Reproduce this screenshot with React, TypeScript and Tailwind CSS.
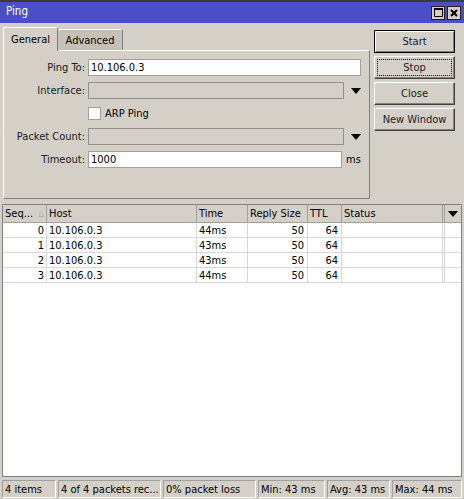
import React from 'react';

const font = { fontFamily: '"DejaVu Sans Condensed", "DejaVu Sans", Verdana, sans-serif', fontStretch: 'condensed' as const };

const rows = [
  { seq: 0, host: '10.106.0.3', time: '44ms', size: 50, ttl: 64 },
  { seq: 1, host: '10.106.0.3', time: '43ms', size: 50, ttl: 64 },
  { seq: 2, host: '10.106.0.3', time: '43ms', size: 50, ttl: 64 },
  { seq: 3, host: '10.106.0.3', time: '44ms', size: 50, ttl: 64 },
];

const Arrow = () => (
  <svg width="10" height="6" viewBox="0 0 10 6" className="block">
    <path d="M0 0 H10 L5 6 Z" fill="#000" />
  </svg>
);

const Label: React.FC<{ text: string }> = ({ text }) => (
  <div className="w-[84px] shrink-0 text-right pr-[3px] text-[#1a1a1a] whitespace-nowrap">{text}</div>
);

const Btn: React.FC<{ text: string; variant?: 'default' | 'focus' }> = ({ text, variant }) => (
  <div
    className={`h-[23px] flex items-center justify-center border text-[#1a1a2a] ${
      variant === 'default'
        ? 'border-[#000] shadow-[inset_1px_1px_0_#fff,inset_-1px_-1px_0_#808080]'
        : 'border-t-white border-l-white border-r-[#404040] border-b-[#404040] shadow-[inset_-1px_-1px_0_#808080]'
    }`}
  >
    {variant === 'focus' ? (
      <div className="w-[75px] h-[17px] border border-dotted border-[#000] flex items-center justify-center">{text}</div>
    ) : (
      text
    )}
  </div>
);

export default function App() {
  return (
    <div className="w-[464px] h-[499px] bg-[#d4d0c8] flex flex-col text-[11px] leading-none overflow-hidden" style={font}>
      {/* title bar */}
      <div className="h-[2px] bg-[#3a3a3a]" />
      <div className="h-[21px] bg-[#4a4fc9] flex items-center pl-[6px] pr-[3px] text-white text-[11.5px]">
        <span className="flex-1 pb-[1px]">Ping</span>
        <div className="flex gap-[2px]">
          <div className="w-[14px] h-[14px] bg-[#d4d0c8] border border-[#222] flex items-center justify-center">
            <div className="w-[9px] h-[9px] border border-[#000] border-t-2" />
          </div>
          <div className="w-[14px] h-[14px] bg-[#d4d0c8] border border-[#222] flex items-center justify-center">
            <svg width="8" height="8" viewBox="0 0 8 8">
              <path d="M1 1 L7 7 M7 1 L1 7" stroke="#000" strokeWidth="2" />
            </svg>
          </div>
        </div>
      </div>

      {/* upper area */}
      <div className="flex pl-[3px] pt-[3px]">
        <div className="w-[367px] flex flex-col">
          <div className="flex items-end h-[24px]">
            <div className="w-[55px] h-[24px] flex items-center justify-center bg-[#d4d0c8] border-t border-l border-white border-r border-r-[#808080] relative z-10 -mb-[1px] pb-[1px]">
              General
            </div>
            <div className="w-[65px] h-[21px] flex items-center justify-center bg-[#c5c1b9] border-t border-white border-r border-r-[#808080]">
              Advanced
            </div>
          </div>
          <div className="h-[149px] border-l border-t border-white border-r border-b border-r-[#808080] border-b-[#808080] flex flex-col pt-[8px] gap-[6px]">
            <div className="flex items-center h-[17px]">
              <Label text="Ping To:" />
              <div className="w-[273px] h-[17px] bg-white border border-[#a0a0a0] flex items-center px-[2px]">10.106.0.3</div>
            </div>
            <div className="flex items-center h-[17px]">
              <Label text="Interface:" />
              <div className="w-[256px] h-[17px] border border-[#909090]" />
              <div className="ml-[4px] pl-[3px]"><Arrow /></div>
            </div>
            <div className="flex items-center h-[17px] pl-[84px]">
              <div className="w-[13px] h-[13px] bg-white border border-[#a0a0a0]" />
              <span className="ml-[4px]">ARP Ping</span>
            </div>
            <div className="flex items-center h-[17px]">
              <Label text="Packet Count:" />
              <div className="w-[256px] h-[17px] border border-[#909090]" />
              <div className="ml-[4px] pl-[3px]"><Arrow /></div>
            </div>
            <div className="flex items-center h-[17px]">
              <Label text="Timeout:" />
              <div className="w-[254px] h-[17px] bg-white border border-[#a0a0a0] flex items-center px-[2px]">1000</div>
              <span className="ml-[4px]">ms</span>
            </div>
          </div>
        </div>
        <div className="ml-[4px] w-[81px] pt-[4px] flex flex-col gap-[3px]">
          <Btn text="Start" variant="default" />
          <Btn text="Stop" variant="focus" />
          <Btn text="Close" />
          <Btn text="New Window" />
        </div>
      </div>

      {/* table */}
      <div className="mt-[5px] mx-[2px] flex-1 flex flex-col border border-[#808080] bg-white whitespace-nowrap">
        <div className="flex h-[18px] bg-[#d4d0c8] border-b border-[#a0a0a0]">
          <div className="w-[44px] flex items-center px-[2px] border-r border-[#a0a0a0]">
            <span>Seq...</span>
            <span className="ml-auto text-[8px] text-[#a0a0a0]">△</span>
          </div>
          <div className="w-[150px] flex items-center px-[2px] border-r border-[#a0a0a0]">Host</div>
          <div className="w-[51px] flex items-center px-[2px] border-r border-[#a0a0a0]">Time</div>
          <div className="w-[60px] flex items-center px-[2px] border-r border-[#a0a0a0]">Reply Size</div>
          <div className="w-[34px] flex items-center px-[2px] border-r border-[#a0a0a0]">TTL</div>
          <div className="w-[101px] flex items-center px-[2px] border-r border-[#a0a0a0]">Status</div>
          <div className="w-[2px] border-r border-[#a0a0a0]" />
          <div className="flex-1 flex items-center justify-center"><Arrow /></div>
        </div>
        {rows.map((r) => (
          <div key={r.seq} className="flex h-[15px] border-b border-[#d8d8d8]">
            <div className="w-[44px] flex items-center justify-end px-[2px] border-r border-[#d8d8d8]">{r.seq}</div>
            <div className="w-[150px] flex items-center px-[2px] border-r border-[#d8d8d8]">{r.host}</div>
            <div className="w-[51px] flex items-center px-[2px] border-r border-[#d8d8d8]">{r.time}</div>
            <div className="w-[60px] flex items-center justify-end px-[3px] border-r border-[#d8d8d8]">{r.size}</div>
            <div className="w-[34px] flex items-center justify-end px-[3px] border-r border-[#d8d8d8]">{r.ttl}</div>
            <div className="w-[101px] border-r border-[#d8d8d8]" />
            <div className="w-[2px] border-r border-[#d8d8d8]" />
            <div className="flex-1" />
          </div>
        ))}
      </div>

      {/* status bar */}
      <div className="h-[18px] mt-[3px] mb-[1px] mx-[2px] flex gap-[2px]">
        {[
          ['4 items', 'w-[54px]'],
          ['4 of 4 packets rec...', 'w-[103px]'],
          ['0% packet loss', 'w-[93px]'],
          ['Min: 43 ms', 'w-[67px]'],
          ['Avg: 43 ms', 'w-[63px]'],
          ['Max: 44 ms', 'flex-1'],
        ].map(([t, w]) => (
          <div key={t} className={`${w} flex items-center pl-[2px] border-t border-l border-[#a0a0a0] border-r border-b border-r-white border-b-white whitespace-nowrap overflow-hidden`}>
            {t}
          </div>
        ))}
      </div>
    </div>
  );
}
